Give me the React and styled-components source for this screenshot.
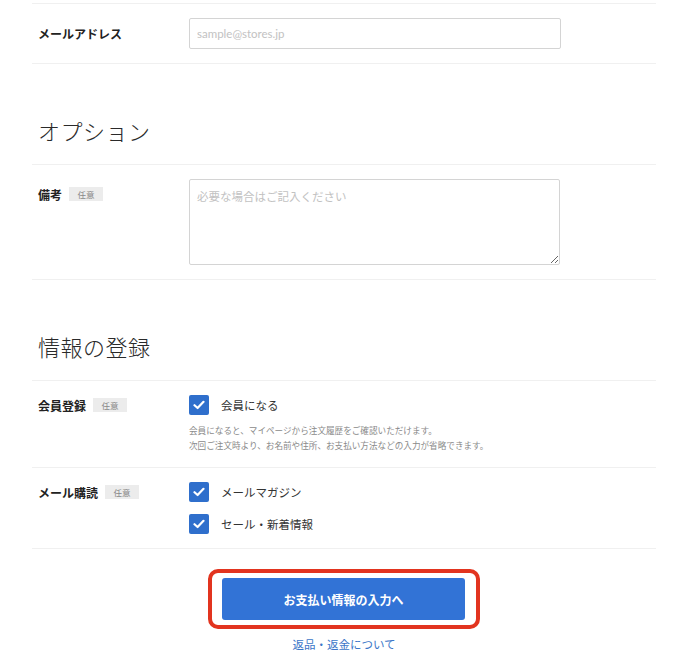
import React from 'react';
import styled, { createGlobalStyle } from 'styled-components';

const GlobalStyle = createGlobalStyle`
  body {
    margin: 0;
    background: #fff;
    font-family: "Noto Sans CJK JP", "Noto Sans", sans-serif;
    color: #222;
  }
`;

const Page = styled.div`
  width: 624px;
  margin-left: 32px;
  padding-top: 3px;
`;

const Row = styled.div`
  display: grid;
  grid-template-columns: 151px 1fr;
  padding: 14px 6px;
  border-top: 1px solid #f0f0f0;
  border-bottom: ${({ last }) => (last ? '1px solid #f0f0f0' : '0')};
`;

const LabelCell = styled.div`
  display: flex;
  align-items: center;
  gap: 7px;
  height: ${({ h }) => h || 30}px;
  align-self: start;
`;

const Label = styled.span`
  font-size: 12px;
  font-weight: 700;
  color: #222;
`;

const Badge = styled.span`
  display: inline-flex;
  align-items: center;
  justify-content: center;
  width: 34px;
  height: 14px;
  background: #ececec;
  color: #888;
  font-size: 8.5px;
`;

const TextInput = styled.input`
  box-sizing: border-box;
  width: 372px;
  height: 31px;
  padding: 0 7px;
  border: 1px solid #d4d4d4;
  border-radius: 2px;
  font-family: Lato, "Noto Sans CJK JP", sans-serif;
  font-size: 11.5px;
  outline: none;
  &::placeholder {
    color: #c2c2c2;
  }
`;

const TextArea = styled.textarea`
  display: block;
  box-sizing: border-box;
  width: 371px;
  height: 86px;
  padding: 8px 7px;
  border: 1px solid #d4d4d4;
  border-radius: 2px;
  font-family: "Noto Sans CJK JP", sans-serif;
  font-size: 11.5px;
  outline: none;
  &::placeholder {
    color: #c2c2c2;
  }
`;

const SectionTitle = styled.h2`
  margin: 0;
  padding: 51px 6px 19px;
  font-size: 22px;
  line-height: 30px;
  font-weight: 300;
  color: #2a2a2a;
  letter-spacing: 0.5px;
`;

const Checks = styled.div`
  display: flex;
  flex-direction: column;
  gap: 12px;
`;

const CheckRow = styled.label`
  display: flex;
  align-items: center;
  gap: 12px;
  font-size: 11.5px;
  color: #333;
`;

const Box = styled.span`
  display: inline-flex;
  align-items: center;
  justify-content: center;
  width: 20px;
  height: 20px;
  border-radius: 2px;
  background: #2f6fcc;
`;

const Help = styled.p`
  margin: 8px 0 0;
  font-size: 8.6px;
  line-height: 15px;
  color: #8a8a8a;
`;

const Footer = styled.div`
  display: flex;
  flex-direction: column;
  align-items: center;
  padding-top: 20px;
`;

const Highlight = styled.div`
  border: 4px solid #e2341f;
  border-radius: 10px;
  padding: 5px 11px 5px 10px;
`;

const PrimaryButton = styled.button`
  width: 243px;
  height: 42px;
  border: 0;
  border-radius: 3px;
  background: #3273d6;
  color: #fff;
  font-family: "Noto Sans CJK JP", sans-serif;
  font-size: 12px;
  font-weight: 700;
  cursor: pointer;
`;

const TextLink = styled.a`
  margin-top: 7px;
  font-size: 11.5px;
  color: #3b76c8;
  text-decoration: none;
`;

const Check = ({ children }) => (
  <CheckRow>
    <Box>
      <svg width="12" height="10" viewBox="0 0 12 10" fill="none">
        <path d="M1.5 5.2 L4.6 8 L10.5 1.8" stroke="#fff" strokeWidth="2.2" strokeLinecap="round" strokeLinejoin="round" />
      </svg>
    </Box>
    {children}
  </CheckRow>
);

export default function App() {
  return (
    <>
      <GlobalStyle />
      <Page>
        <Row last>
          <LabelCell>
            <Label>メールアドレス</Label>
          </LabelCell>
          <div>
            <TextInput placeholder="sample@stores.jp" />
          </div>
        </Row>

        <SectionTitle>オプション</SectionTitle>
        <Row last>
          <LabelCell>
            <Label>備考</Label>
            <Badge>任意</Badge>
          </LabelCell>
          <div>
            <TextArea placeholder="必要な場合はご記入ください" />
          </div>
        </Row>

        <SectionTitle>情報の登録</SectionTitle>
        <Row>
          <LabelCell h={20}>
            <Label>会員登録</Label>
            <Badge>任意</Badge>
          </LabelCell>
          <div>
            <Check>会員になる</Check>
            <Help>
              会員になると、マイページから注文履歴をご確認いただけます。
              <br />
              次回ご注文時より、お名前や住所、お支払い方法などの入力が省略できます。
            </Help>
          </div>
        </Row>
        <Row last>
          <LabelCell h={20}>
            <Label>メール購読</Label>
            <Badge>任意</Badge>
          </LabelCell>
          <Checks>
            <Check>メールマガジン</Check>
            <Check>セール・新着情報</Check>
          </Checks>
        </Row>

        <Footer>
          <Highlight>
            <PrimaryButton type="button">お支払い情報の入力へ</PrimaryButton>
          </Highlight>
          <TextLink href="#">返品・返金について</TextLink>
        </Footer>
      </Page>
    </>
  );
}
